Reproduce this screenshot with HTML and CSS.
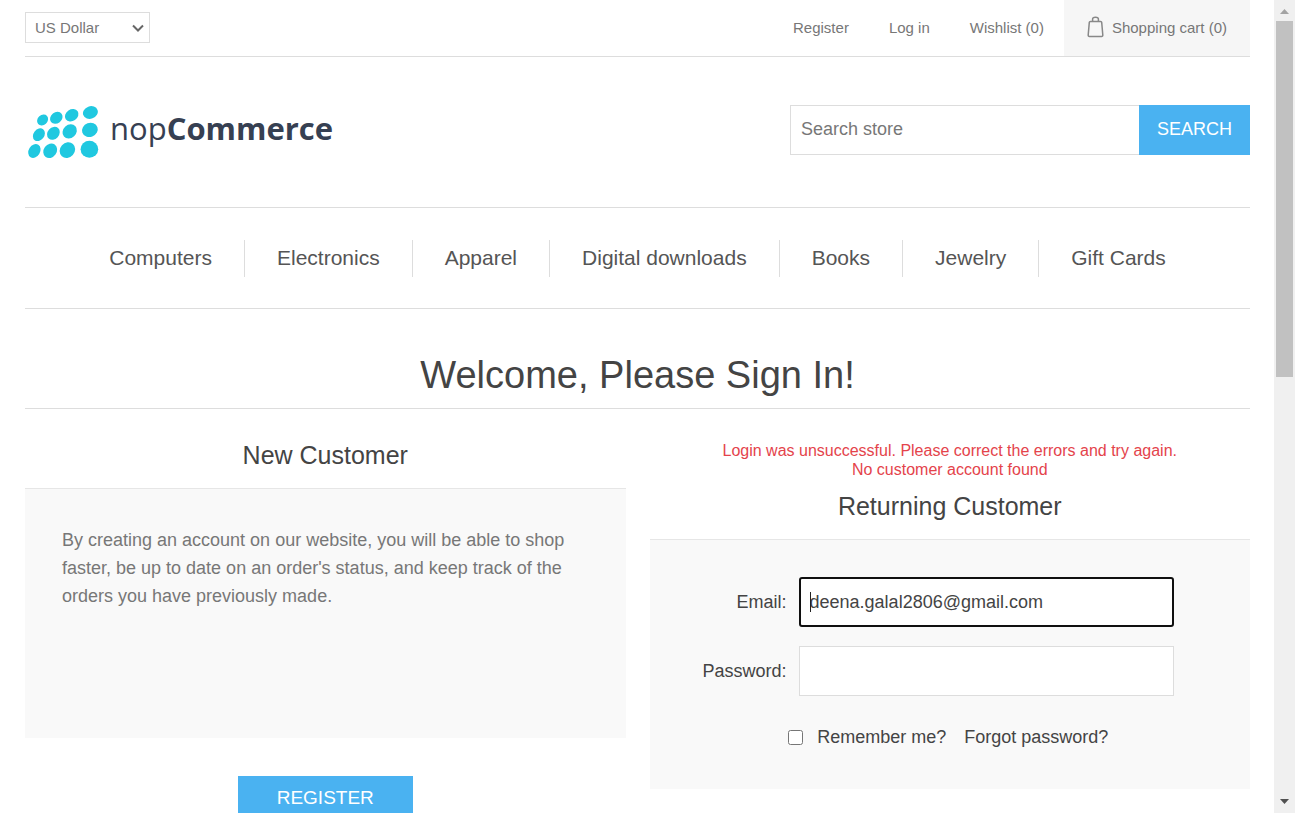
FILE: index.html
```html
<!DOCTYPE html>
<html lang="en">
<head>
<meta charset="utf-8">
<title>nopCommerce - Login</title>
<link rel="stylesheet" href="styles.css">
</head>
<body>
<div class="page">
  <div class="topbar">
    <div class="currency">
      <select class="currency-select" aria-label="Currency"><option>US Dollar</option><option>Euro</option></select>
      <svg class="chevron" viewBox="0 0 12 8" aria-hidden="true"><path d="M1 1.500L6 6.500L11 1.500"/></svg>
    </div>
    <nav class="account" aria-label="Account">
      <a href="#">Register</a>
      <a href="#">Log in</a>
      <a href="#">Wishlist (0)</a>
      <a href="#" class="cart">
        <svg class="bag" viewBox="0 0 17 22" aria-hidden="true">
          <path d="M5.600 5V3Q5.600 1.200 8.500 1.200T11.400 3V5" />
          <path d="M3.400 5.400H13.600Q14.600 5.400 14.700 6.400L15.800 19Q15.900 20.400 14.600 20.400H2.400Q1.100 20.400 1.200 19L2.300 6.400Q2.400 5.400 3.400 5.400Z" />
        </svg>
        Shopping cart (0)
      </a>
    </nav>
  </div>

  <header class="header">
    <a href="#" class="logo" aria-label="nopCommerce">
      <svg class="dots" viewBox="0 0 76 56" aria-hidden="true">
        <ellipse cx="17.600" cy="15" rx="6" ry="4.900" transform="rotate(-42 17.600 15)"/>
        <ellipse cx="31.300" cy="12.800" rx="6.700" ry="5.500" transform="rotate(-38 31.300 12.800)"/>
        <ellipse cx="46.700" cy="10.200" rx="7.200" ry="5.800" transform="rotate(-34 46.700 10.200)"/>
        <ellipse cx="65.400" cy="7.500" rx="7.600" ry="6.200" transform="rotate(-20 65.400 7.500)"/>
        <ellipse cx="13.900" cy="29.700" rx="6.900" ry="5.400" transform="rotate(-52 13.900 29.700)"/>
        <ellipse cx="28.400" cy="28.300" rx="7" ry="5.800" transform="rotate(-48 28.400 28.300)"/>
        <ellipse cx="44.700" cy="26.400" rx="7.700" ry="6.500" transform="rotate(-42 44.700 26.400)"/>
        <ellipse cx="64.900" cy="24.900" rx="8" ry="7" transform="rotate(-20 64.900 24.900)"/>
        <ellipse cx="9.400" cy="46" rx="7.300" ry="5.700" transform="rotate(-58 9.400 46)"/>
        <ellipse cx="25.200" cy="45.800" rx="7.700" ry="6.500" transform="rotate(-54 25.200 45.800)"/>
        <ellipse cx="42.400" cy="45.100" rx="8.300" ry="7.300" transform="rotate(-48 42.400 45.100)"/>
        <ellipse cx="64.400" cy="44.300" rx="8.800" ry="8.500"/>
      </svg>
      <span class="wordmark">nop<b>Commerce</b></span>
    </a>
    <form class="search">
      <input class="search-box" type="text" placeholder="Search store" aria-label="Search store">
      <button class="search-button" type="button">SEARCH</button>
    </form>
  </header>

  <nav class="menu" aria-label="Categories">
    <a href="#">Computers</a>
    <a href="#">Electronics</a>
    <a href="#">Apparel</a>
    <a href="#">Digital downloads</a>
    <a href="#">Books</a>
    <a href="#">Jewelry</a>
    <a href="#">Gift Cards</a>
  </nav>

  <main>
    <h1 class="title">Welcome, Please Sign In!</h1>
    <div class="columns">
      <section>
        <h2 class="subtitle">New Customer</h2>
        <div class="panel intro">
          <p>By creating an account on our website, you will be able to shop faster, be up to date on an order's status, and keep track of the orders you have previously made.</p>
        </div>
        <button class="register" type="button">REGISTER</button>
      </section>
      <section>
        <div class="errors" role="alert">Login was unsuccessful. Please correct the errors and try again.<br>No customer account found</div>
        <h2 class="subtitle">Returning Customer</h2>
        <form class="panel">
          <div class="fields">
            <label for="email">Email:</label>
            <div class="active"><input id="email" class="field" type="email" value="deena.galal2806@gmail.com"></div>
            <label for="password">Password:</label>
            <input id="password" class="field" type="password">
          </div>
          <div class="options">
            <input id="remember" class="tick" type="checkbox">
            <label for="remember">Remember me?</label>
            <a href="#">Forgot password?</a>
          </div>
        </form>
      </section>
    </div>
  </main>
</div>
<div class="scrollbar" aria-hidden="true">
  <svg class="arrow" viewBox="0 0 21 21"><path d="M6 14L10.500 9L15 14Z" fill="#a3a3a3"/></svg>
  <div class="track"><div class="thumb"></div></div>
  <svg class="arrow" viewBox="0 0 21 21"><path d="M6 7L10.500 12L15 7Z" fill="#505050"/></svg>
</div>
</body>
</html>
```
FILE: styles.css
```css
* { box-sizing: border-box; }

body {
  margin: 0;
  display: flex;
  height: 100vh;
  overflow: hidden;
  background: #fff;
  color: #444;
  font-family: "Liberation Sans", Arial, sans-serif;
  font-size: 18px;
}

a { color: inherit; text-decoration: none; }
input, button, select { font-family: inherit; color: inherit; margin: 0; }
h1, h2, p { margin: 0; font-weight: 400; }

.page { flex: 1; min-width: 0; padding: 0 24px 0 25px; }

.topbar {
  display: flex;
  justify-content: space-between;
  height: 57px;
  border-bottom: 1px solid #ddd;
  color: #777;
  font-size: 15px;
}
.currency { position: relative; width: 125px; margin-top: 12px; }
.currency-select {
  appearance: none;
  display: block;
  width: 100%;
  height: 31px;
  padding: 0 9px;
  border: 1px solid #ddd;
  border-radius: 0;
  background: #fff;
  font-size: 15px;
}
.chevron {
  position: absolute;
  right: 6px;
  top: 12px;
  width: 12px;
  height: 8px;
  fill: none;
  stroke: #666;
  stroke-width: 2;
  pointer-events: none;
}
.account { display: flex; }
.account a { display: flex; align-items: center; padding: 0 20px 1px; }
.account .cart { gap: 8px; padding: 0 23px 1px; background: #f6f6f6; }
.bag { width: 17px; height: 22px; margin-bottom: 2px; fill: none; stroke: #888; stroke-width: 1.5; }

.header {
  display: flex;
  justify-content: space-between;
  align-items: center;
  padding: 48px 0 52px;
  border-bottom: 1px solid #ddd;
}
.logo { display: flex; align-items: center; gap: 9px; }
.dots { width: 76px; height: 56px; margin-bottom: -6px; fill: #20c8e0; }
.wordmark {
  padding-bottom: 3px;
  color: #364052;
  font-family: "Open Sans", "Noto Sans", sans-serif;
  font-size: 31px;
  line-height: 47px;
}
.search { display: flex; width: 460px; }
.search-box {
  flex: 1;
  min-width: 0;
  height: 50px;
  padding: 0 10px 2px;
  border: 1px solid #ddd;
  border-right: 0;
  font-size: 18px;
}
.search-box::placeholder { color: #777; opacity: 1; }
.search-button {
  width: 111px;
  padding: 0 0 2px;
  border: 0;
  background: #4ab2f1;
  color: #fff;
  font-size: 18px;
}

.menu {
  display: flex;
  justify-content: center;
  padding: 32px 0 31px;
  border-bottom: 1px solid #ddd;
  color: #555;
  font-size: 21px;
  line-height: 35px;
}
.menu a { padding: 0 32px 2px; }
.menu a + a { border-left: 1px solid #ddd; }

.title {
  padding: 44px 0 11px;
  border-bottom: 1px solid #ddd;
  font-size: 38px;
  line-height: 44px;
  text-align: center;
}
.columns { display: grid; grid-template-columns: 1fr 1fr; gap: 24px; padding-top: 31px; }
.subtitle { padding-bottom: 18px; font-size: 25px; line-height: 30px; text-align: center; }
.errors { padding: 1px 0 12px; color: #e4434b; font-size: 16px; line-height: 19px; text-align: center; }
.panel { min-height: 250px; border-top: 1px solid #e6e6e6; background: #f9f9f9; padding: 37px 0; }
.intro { padding: 37px; color: #777; line-height: 28px; }
.register {
  display: block;
  width: 175px;
  height: 44px;
  margin: 38px auto 0;
  padding: 0;
  border: 0;
  background: #4ab2f1;
  color: #fff;
  font-size: 19px;
}

.fields {
  display: grid;
  grid-template-columns: max-content 1fr;
  align-items: center;
  gap: 19px 12px;
  padding: 0 76px 0 53px;
}
.fields label { text-align: right; }
.field {
  display: block;
  width: 100%;
  height: 50px;
  padding: 0 10px;
  border: 1px solid #ddd;
  background: #fff;
  font-size: 18px;
}
.active { position: relative; }
.active .field { padding: 0 9px; border: 2px solid #101010; border-radius: 3px; }
.active::after {
  content: "";
  position: absolute;
  left: 11px;
  top: 15px;
  width: 1px;
  height: 20px;
  background: #222;
}
.options {
  display: flex;
  justify-content: center;
  align-items: center;
  padding: 30px 3px 0 0;
  line-height: 22px;
}
.tick { width: 15px; height: 15px; margin-right: 14px; }
.options a { margin-left: 18px; }

.scrollbar { display: flex; flex-direction: column; width: 21px; background: #f0f0f0; }
.arrow { display: block; width: 21px; height: 21px; }
.track { flex: 1; padding: 0 2px; }
.thumb { height: 46.2%; background: #c1c1c1; }
```
